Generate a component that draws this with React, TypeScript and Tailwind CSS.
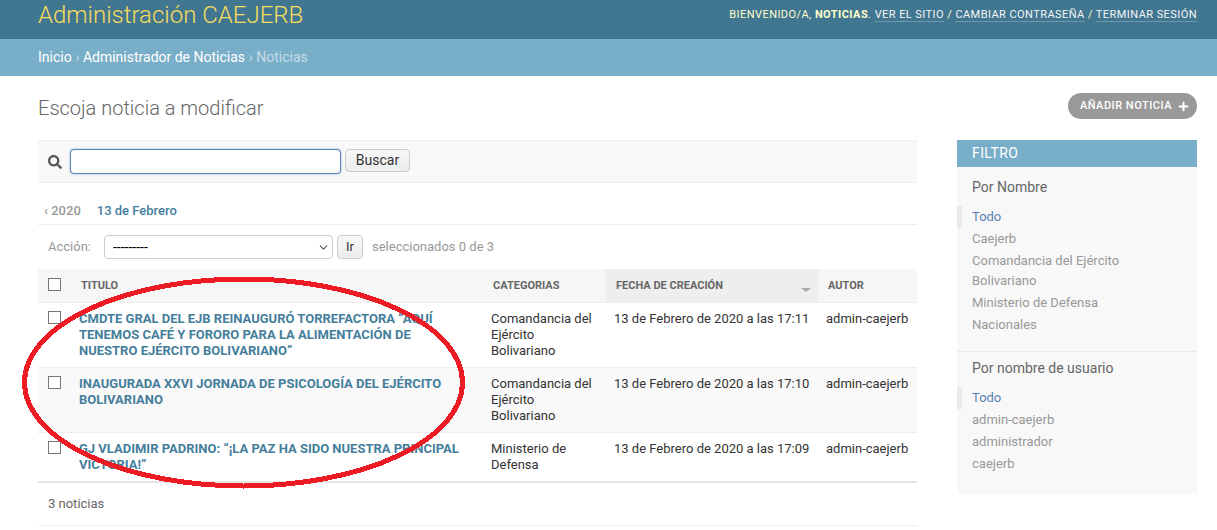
import { FaPlus, FaSearch } from 'react-icons/fa'
import { ChevronDown } from 'lucide-react'

const rows = [
    {
        title: 'CMDTE GRAL DEL EJB REINAUGURÓ TORREFACTORA “AQUÍ TENEMOS CAFÉ Y FORORO PARA LA ALIMENTACIÓN DE NUESTRO EJÉRCITO BOLIVARIANO”',
        category: 'Comandancia del Ejército Bolivariano',
        date: '13 de Febrero de 2020 a las 17:11',
    },
    {
        title: 'INAUGURADA XXVI JORNADA DE PSICOLOGÍA DEL EJÉRCITO BOLIVARIANO',
        category: 'Comandancia del Ejército Bolivariano',
        date: '13 de Febrero de 2020 a las 17:10',
    },
    {
        title: 'GJ VLADIMIR PADRINO: “¡LA PAZ HA SIDO NUESTRA PRINCIPAL VICTORIA!”',
        category: 'Ministerio de Defensa',
        date: '13 de Febrero de 2020 a las 17:09',
    },
]

const Checkbox = () => <input type="checkbox" className="m-0 block h-[13px] w-[13px] appearance-none border border-[#767676] bg-white" />

const FilterGroup = ({ title, items }: { title: string; items: string[] }) => (
    <div>
        <h3 className="pl-[15px] text-[14px] leading-[18px] text-[#666]">{title}</h3>
        <ul className="mt-[10px] text-[13px] leading-[20px] text-[#999]">
            <li className="border-l-[5px] border-[#eaeaea] py-[1px] pl-[10px] text-[#5b80b2]">Todo</li>
            {items.map((item) => (
                <li
                    key={item}
                    className="py-[1px] pr-[15px] pl-[15px]">
                    {item}
                </li>
            ))}
        </ul>
    </div>
)

export default function App() {
    return (
        <div className="relative h-[530px] w-[1217px] overflow-hidden bg-white font-['Roboto',sans-serif] text-[13px] text-[#333]">
            {/* Header */}
            <header className="flex h-[39px] items-start justify-between bg-[#417690] px-[20px] pl-[38px]">
                <div className="text-[24px] leading-[31px] font-light text-[#f5dd5d]">Administración CAEJERB</div>
                <div className="pt-[7px] text-[11px] leading-[16px] tracking-[0.44px] text-[#ffc] uppercase">
                    Bienvenido/a, <strong className="font-bold">Noticias</strong>.{' '}
                    <a className="border-b border-white/25 text-[#f5f5f5]">Ver el sitio</a> /{' '}
                    <a className="border-b border-white/25 text-[#f5f5f5]">Cambiar contraseña</a> /{' '}
                    <a className="border-b border-white/25 text-[#f5f5f5]">Terminar sesión</a>
                </div>
            </header>

            {/* Breadcrumbs */}
            <nav className="flex h-[37px] items-center bg-[#79aec8] pl-[38px] text-[14px] text-[#c4dce8]">
                <a className="text-white">Inicio</a>
                <span className="px-[3.5px]">›</span>
                <a className="text-white">Administrador de Noticias</a>
                <span className="px-[3.5px]">›</span>
                Noticias
            </nav>

            <main className="pr-[20px] pl-[38px]">
                <div className="flex h-[64px] items-start justify-between pt-[17px]">
                    <h1 className="text-[20px] leading-[30px] font-light text-[#666]">Escoja noticia a modificar</h1>
                    <a className="flex h-[26px] items-center gap-[6px] rounded-full bg-[#999] pr-[8px] pl-[12px] text-[11px] font-medium tracking-[0.5px] text-white uppercase">
                        Añadir noticia
                        <FaPlus className="h-[11px] w-[11px]" />
                    </a>
                </div>

                <div className="flex items-start gap-[40px]">
                    <div className="w-[879px]">
                        {/* Search */}
                        <div className="flex h-[43px] items-start gap-[4px] border-y border-[#eee] bg-[#f8f8f8] pt-[8px] pl-[10px]">
                            <FaSearch className="mt-[6px] mr-[4px] h-[14px] w-[14px] text-[#555]" />
                            <input className="h-[25px] w-[271px] rounded-[4px] border border-[#5b80b2] bg-white shadow-[0_0_2px_#7f9fd0] outline-none" />
                            <button className="h-[23px] w-[65px] rounded-[4px] border border-[#ccc] bg-gradient-to-b from-[#f8f8f8] to-[#ececec] pb-[2px] text-[14px] leading-none text-[#333]">
                                Buscar
                            </button>
                        </div>

                        {/* Date hierarchy */}
                        <div className="flex h-[42px] items-end border-b border-[#eee] pb-[5px] pl-[6px] text-[13px] leading-[16px] font-medium">
                            <a className="text-[#999]">‹ 2020</a>
                            <a className="ml-[16px] text-[#447e9b]">13 de Febrero</a>
                        </div>

                        {/* Actions */}
                        <div className="flex h-[44px] items-center pl-[10px] text-[#999]">
                            <span className="w-[56px]">Acción:</span>
                            <div className="relative h-[24px] w-[229px]">
                                <select className="h-full w-full appearance-none rounded-[4px] border border-[#ccc] bg-white pl-[8px] text-[14px] text-black">
                                    <option>---------</option>
                                </select>
                                <ChevronDown className="pointer-events-none absolute top-[6px] right-[3px] h-[13px] w-[13px] text-[#555]" strokeWidth={2} />
                            </div>
                            <button className="ml-[4px] h-[24px] w-[26px] rounded-[4px] border border-[#ccc] bg-gradient-to-b from-[#f8f8f8] to-[#ececec] text-[13px] text-[#333]">
                                Ir
                            </button>
                            <span className="ml-[9px]">seleccionados 0 de 3</span>
                        </div>

                        {/* Results */}
                        <table className="w-full table-fixed border-collapse border-b-2 border-[#e5e5e5] leading-[16px]">
                            <colgroup>
                                <col className="w-[33px]" />
                                <col className="w-[412px]" />
                                <col className="w-[123px]" />
                                <col className="w-[212px]" />
                                <col className="w-[99px]" />
                            </colgroup>
                            <thead>
                                <tr className="h-[33px] bg-[#f6f6f6] text-left text-[11px] font-bold text-[#666] uppercase">
                                    <th className="pb-[2px] pl-[10px] align-middle">
                                        <Checkbox />
                                    </th>
                                    <th className="pt-[2px] pl-[10px]">Titulo</th>
                                    <th className="pt-[2px] pl-[10px]">Categorias</th>
                                    <th className="relative bg-[#eeeeee] pt-[2px] pl-[10px]">
                                        Fecha de creación
                                        <span className="absolute top-[19px] right-[7px] h-0 w-0 border-x-[5px] border-t-[4px] border-x-transparent border-t-[#aaa]" />
                                    </th>
                                    <th className="pt-[2px] pl-[10px]">Autor</th>
                                </tr>
                            </thead>
                            <tbody>
                                {rows.map((row, i) => (
                                    <tr key={row.date} className={i === 1 ? 'border-t border-[#eee] bg-[#f9f9f9]' : 'border-t border-[#eee]'}>
                                        <td className="pt-[8px] pl-[10px] align-top">
                                            <Checkbox />
                                        </td>
                                        <td className="py-[8px] pr-[16px] pl-[8px] align-top font-bold text-[#447e9b]">{row.title}</td>
                                        <td className="px-[8px] py-[8px] align-top">{row.category}</td>
                                        <td className="px-[8px] py-[8px] align-top">{row.date}</td>
                                        <td className="px-[8px] py-[8px] align-top">admin-caejerb</td>
                                    </tr>
                                ))}
                            </tbody>
                        </table>

                        <p className="h-[43px] border-b border-[#eee] pt-[13px] pl-[10px] leading-[16px] text-[#666]">3 noticias</p>
                    </div>

                    {/* Filter */}
                    <aside className="h-[354px] w-[240px] bg-[#f8f8f8]">
                        <h2 className="h-[27px] bg-[#79aec8] pl-[15px] text-[14px] leading-[27px] tracking-[0.4px] text-white uppercase">Filtro</h2>
                        <div className="border-b border-[#eaeaea] pt-[11px] pb-[15px]">
                            <FilterGroup title="Por Nombre" items={['Caejerb', 'Comandancia del Ejército Bolivariano', 'Ministerio de Defensa', 'Nacionales']} />
                        </div>
                        <div className="pt-[7px]">
                            <FilterGroup title="Por nombre de usuario" items={['admin-caejerb', 'administrador', 'caejerb']} />
                        </div>
                    </aside>
                </div>
            </main>

            {/* Red hand-drawn circle over the results */}
            <svg className="pointer-events-none absolute top-0 left-0" width="1217" height="530" fill="none" shapeRendering="crispEdges">
                <ellipse cx="243.5" cy="382.5" rx="219" ry="103.5" stroke="#ed1c24" strokeWidth="5" />
            </svg>
        </div>
    )
}
